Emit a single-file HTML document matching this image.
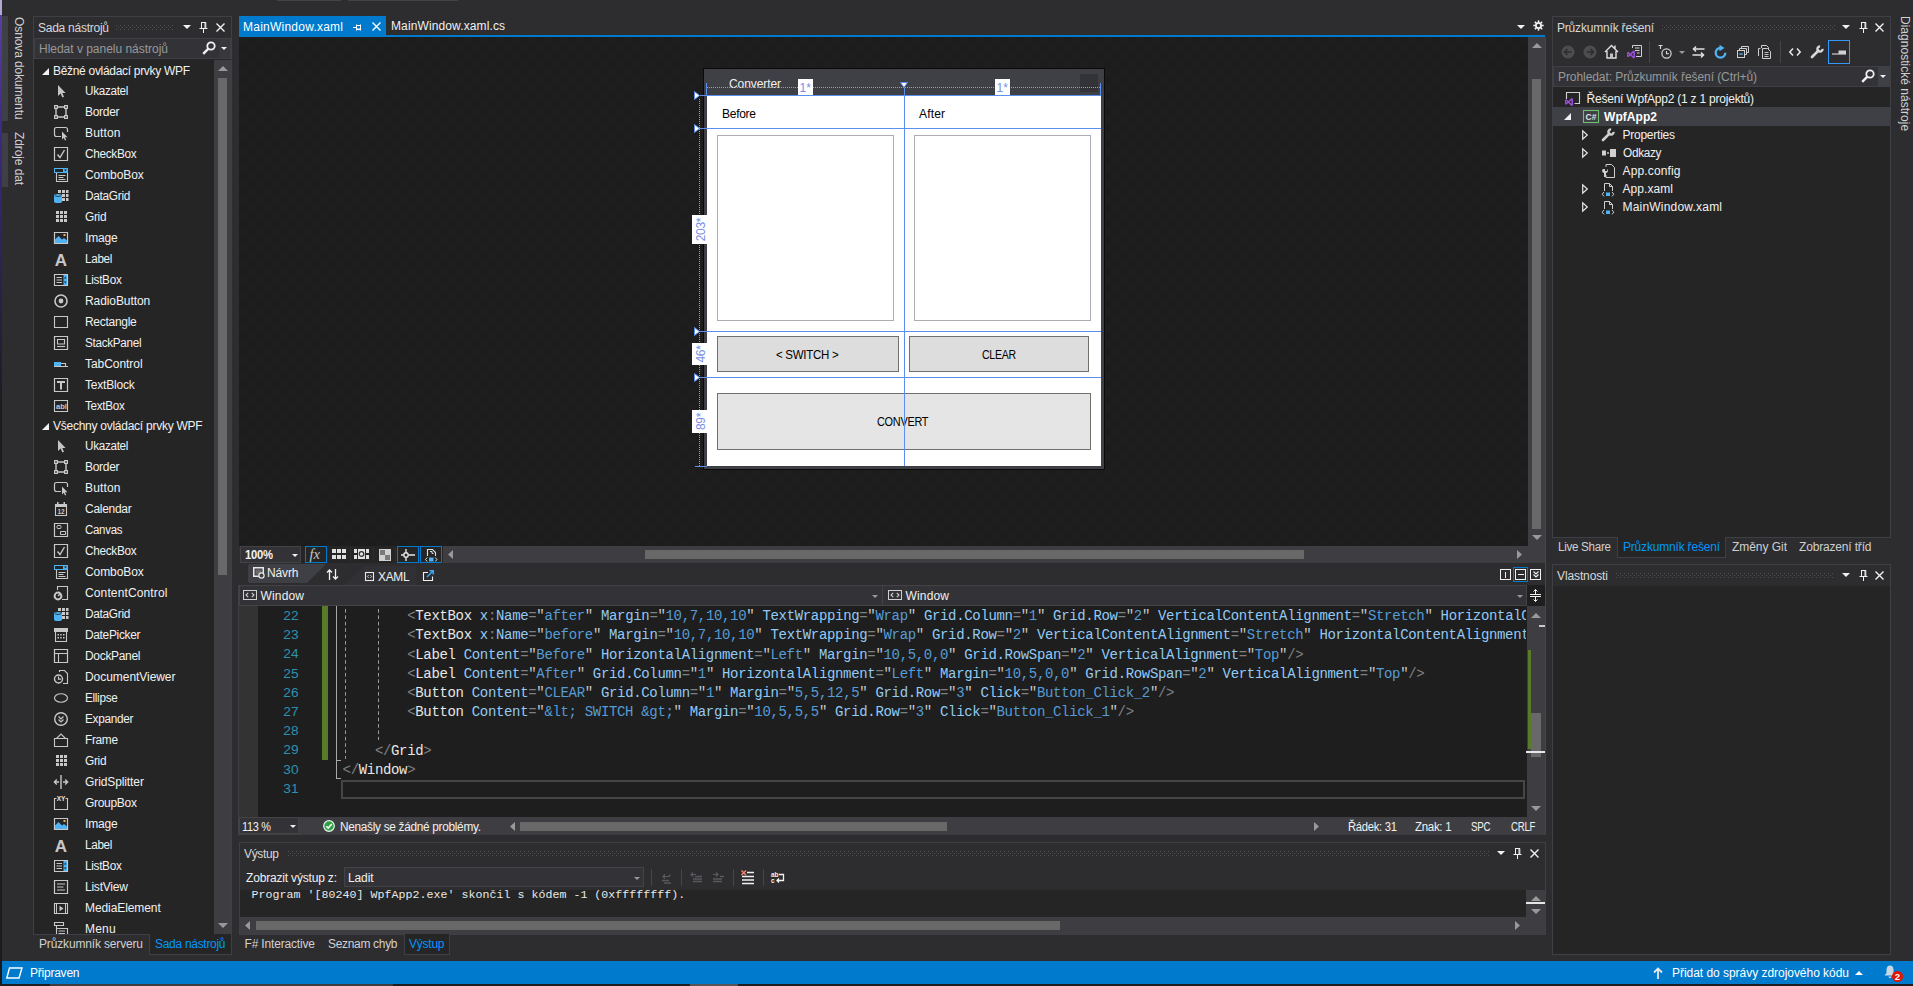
<!DOCTYPE html>
<html>
<head>
<meta charset="utf-8">
<title>VS</title>
<style>
*{box-sizing:border-box;margin:0;padding:0}
html,body{width:1913px;height:986px;overflow:hidden;background:#2d2d30}
body{font-family:"Liberation Sans",sans-serif;font-size:12px;color:#f1f1f1;position:relative}
.a{position:absolute}
.t{position:absolute;white-space:pre;line-height:14px;height:14px}
svg{position:absolute;overflow:visible}
.grip{position:absolute;height:5px;background-image:radial-gradient(circle,#59595e 0.55px,transparent 0.9px),radial-gradient(circle,#59595e 0.55px,transparent 0.9px);background-size:4px 4px;background-position:0 0,2px 2px}
.cl{position:absolute;white-space:pre;font-family:"Liberation Mono",monospace;line-height:19px;height:19px;color:#e6e6e6}
.cl .d{color:#808080}
.cl .k{color:#92caf4}
.cl .v{color:#569cd6}
.cl .q{color:#c8c8c8}
</style>
</head>
<body>
<div class="a" style="left:0;top:0;width:2px;height:15px;background:#b4a7d6"></div>
<div class="a" style="left:0;top:15px;width:2px;height:400px;background:linear-gradient(#5a3fa0,#3a2a80 30%,#1b1b1c)"></div>
<div class="a" style="left:0;top:415px;width:2px;height:546px;background:#1b1b1c"></div>
<div class="a" style="left:277px;top:0;width:64px;height:1px;background:#434346"></div><div class="a" style="left:348px;top:0;width:110px;height:1px;background:#434346"></div>
<div class="a" style="left:2px;top:16px;width:6px;height:105px;background:#3f3f46;"></div>
<div class="a" style="left:2px;top:133px;width:6px;height:54px;background:#3f3f46;"></div>
<div class="t" style="left:26px;top:17px;transform:rotate(90deg);transform-origin:0 0;letter-spacing:-0.1px;color:#d0d0d0">Osnova dokumentu</div>
<div class="t" style="left:26px;top:132px;transform:rotate(90deg);transform-origin:0 0;letter-spacing:-0.1px;color:#d0d0d0">Zdroje dat</div>
<div class="a" style="left:33px;top:16px;width:199px;height:919px;background:#252526;border:1px solid #3f3f46;"></div>
<div class="a" style="left:34px;top:17px;width:197px;height:21px;background:#2d2d30;"></div>
<div class="t" style="left:38px;top:20.5px;color:#d8d8d8;letter-spacing:-0.254px;">Sada nástrojů</div>
<div class="a" style="left:116px;top:25px;width:58px;height:1px;background-image:linear-gradient(90deg,#505055 1px,transparent 1px);background-size:4px 1px;"></div><div class="a" style="left:118px;top:27px;width:54px;height:1px;background-image:linear-gradient(90deg,#505055 1px,transparent 1px);background-size:4px 1px;"></div><div class="a" style="left:116px;top:29px;width:58px;height:1px;background-image:linear-gradient(90deg,#505055 1px,transparent 1px);background-size:4px 1px;"></div>
<svg style="left:183px;top:25px" width="8" height="4" viewBox="0 0 8 4"><path d="M0 0H8L4 4Z" fill="#f1f1f1"/></svg>
<svg style="left:199px;top:22px" width="9" height="11" viewBox="0 0 9 11"><path d="M2 0.5H7M2.5 0.5V6.5M6 0.5V6.5M6.8 0.5V6.5M0.5 6.5H8.5M4.5 6.5V11" stroke="#f1f1f1" stroke-width="1" fill="none"/></svg>
<svg style="left:216px;top:23px" width="9" height="9" viewBox="0 0 9 9"><path d="M0.5 0.5L8.5 8.5M8.5 0.5L0.5 8.5" stroke="#f1f1f1" stroke-width="1.4" fill="none"/></svg>
<div class="a" style="left:34px;top:38px;width:197px;height:21px;background:#333337;border:1px solid #3f3f46;"></div>
<div class="a" style="left:219px;top:39px;width:11px;height:19px;background:#38383c;"></div>
<div class="t" style="left:39px;top:41.5px;color:#999999;letter-spacing:-0.018px;">Hledat v panelu nástrojů</div>
<svg style="left:202px;top:41px" width="14" height="14" viewBox="0 0 14 14"><circle cx="9" cy="5" r="3.7" stroke="#f1f1f1" stroke-width="1.8" fill="none"/><path d="M6.4 7.6L1.2 12.8" stroke="#f1f1f1" stroke-width="2.4"/></svg>
<svg style="left:221px;top:47px" width="6" height="3" viewBox="0 0 6 3"><path d="M0 0H6L3 3Z" fill="#f1f1f1"/></svg>
<div class="a" style="left:34px;top:60px;width:180px;height:874px;background:#252526;"></div>
<div class="a" style="left:214px;top:60px;width:17px;height:874px;background:#3e3e42;"></div>
<div class="a" style="left:218px;top:78px;width:9px;height:497px;background:#686868;"></div>
<svg style="left:218px;top:66px" width="10" height="5" viewBox="0 0 10 5"><path d="M0 5H10L5 0Z" fill="#999"/></svg>
<svg style="left:218px;top:923px" width="10" height="5" viewBox="0 0 10 5"><path d="M0 0H10L5 5Z" fill="#999"/></svg>
<svg style="left:42px;top:67.5px" width="7" height="7" viewBox="0 0 7 7"><path d="M7 0V7H0Z" fill="#f1f1f1"/></svg>
<div class="t" style="left:53px;top:63.5px;color:#f1f1f1;letter-spacing:-0.300px;transform:scaleX(0.9989);transform-origin:0 50%;">Běžné ovládací prvky WPF</div>
<svg style="left:53px;top:83px" width="16" height="16" viewBox="0 0 16 16"><path d="M5 2V13L7.6 10.6L9.4 14.4L11 13.7L9.3 10H12.6Z" fill="#c5c5c5"/></svg>
<div class="t" style="left:85px;top:83.5px;letter-spacing:-0.300px;transform:scaleX(0.9733);transform-origin:0 50%;">Ukazatel</div>
<svg style="left:53px;top:104px" width="16" height="16" viewBox="0 0 16 16"><path d="M3 3H13V13H3Z" stroke="#c8c8c8" stroke-width="1.4" fill="none"/><path d="M1 1h4v4h-4zM11 1h4v4h-4zM1 11h4v4h-4zM11 11h4v4h-4z" fill="#c8c8c8"/><path d="M2 2h2v2h-2zM12 2h2v2h-2zM2 12h2v2h-2zM12 12h2v2h-2z" fill="#6a6a6a"/></svg>
<div class="t" style="left:85px;top:104.5px;letter-spacing:-0.300px;transform:scaleX(0.9994);transform-origin:0 50%;">Border</div>
<svg style="left:53px;top:125px" width="16" height="16" viewBox="0 0 16 16"><path d="M8 11.5H3.5Q1.5 11.5 1.5 9.5V4.5Q1.5 2.5 3.5 2.5H12.5Q14.5 2.5 14.5 4.5V7" stroke="#c8c8c8" stroke-width="1.2" fill="none"/><path d="M9 6.5V14.5L10.8 12.8L12 15.5L13.2 15L12 12.3H14.5Z" fill="#c8c8c8"/></svg>
<div class="t" style="left:85px;top:125.5px;letter-spacing:0.161px;">Button</div>
<svg style="left:53px;top:146px" width="16" height="16" viewBox="0 0 16 16"><path d="M1.5 1.5H14.5V14.5H1.5Z" stroke="#c8c8c8" stroke-width="1.2" fill="none"/><path d="M4.5 8.5L7 11.5L11.5 4" stroke="#c8c8c8" stroke-width="1.4" fill="none"/></svg>
<div class="t" style="left:85px;top:146.5px;letter-spacing:-0.300px;transform:scaleX(0.9830);transform-origin:0 50%;">CheckBox</div>
<svg style="left:53px;top:167px" width="16" height="16" viewBox="0 0 16 16"><path d="M1 1H15V6H1Z" fill="#4fb3f3"/><path d="M2 2H10V5H2Z" fill="#252526"/><path d="M11 2.5H14L12.5 4.5Z" fill="#252526"/><path d="M3.5 6V14.5H14.5V6" stroke="#c8c8c8" stroke-width="1.1" fill="none"/><path d="M5.5 8.5H12.5M5.5 10.5H10.5M5.5 12.5H12.5" stroke="#c8c8c8" stroke-width="1" fill="none"/></svg>
<div class="t" style="left:85px;top:167.5px;letter-spacing:-0.080px;">ComboBox</div>
<svg style="left:53px;top:188px" width="16" height="16" viewBox="0 0 16 16"><path d="M5 2h3v3h-3zM9 2h3v3h-3zM13 2h2.5v3h-2.5zM9 6h3v3h-3zM13 6h2.5v3h-2.5zM9 10h3v3h-3zM13 10h2.5v3h-2.5z" fill="#c8c8c8"/><path d="M1 7.5Q1 6 5 6T9 7.5V13.5Q9 15 5 15T1 13.5Z" fill="#4fb3f3"/><path d="M1.8 7.8Q5 9.2 8.2 7.8" stroke="#252526" stroke-width="0.8" fill="none"/></svg>
<div class="t" style="left:85px;top:188.5px;letter-spacing:-0.300px;transform:scaleX(0.9887);transform-origin:0 50%;">DataGrid</div>
<svg style="left:53px;top:209px" width="16" height="16" viewBox="0 0 16 16"><path d="M3 2h3v3h-3zM7 2h3v3h-3zM11 2h3v3h-3zM3 6h3v3h-3zM7 6h3v3h-3zM11 6h3v3h-3zM3 10h3v3h-3zM7 10h3v3h-3zM11 10h3v3h-3z" fill="#c8c8c8"/></svg>
<div class="t" style="left:85px;top:209.5px;letter-spacing:-0.300px;transform:scaleX(0.9876);transform-origin:0 50%;">Grid</div>
<svg style="left:53px;top:230px" width="16" height="16" viewBox="0 0 16 16"><path d="M1.5 2.5H14.5V13.5H1.5Z" stroke="#c8c8c8" stroke-width="1.2" fill="none"/><path d="M2 13V9.5L5.5 6L9 9.5L11 8L14 10.5V13Z" fill="#4fb3f3"/><path d="M10.5 4h2v2h-2z" fill="#e8b36a"/></svg>
<div class="t" style="left:85px;top:230.5px;letter-spacing:-0.163px;">Image</div>
<svg style="left:53px;top:251px" width="16" height="16" viewBox="0 0 16 16"><text x="8" y="14.5" font-family="Liberation Sans" font-weight="bold" font-size="17" text-anchor="middle" fill="#c8c8c8">A</text></svg>
<div class="t" style="left:85px;top:251.5px;letter-spacing:-0.300px;transform:scaleX(0.9729);transform-origin:0 50%;">Label</div>
<svg style="left:53px;top:272px" width="16" height="16" viewBox="0 0 16 16"><path d="M1.5 2.5H14.5V13.5H1.5Z" stroke="#c8c8c8" stroke-width="1.1" fill="none"/><path d="M3.5 5.5H9M3.5 8H9M3.5 10.5H9" stroke="#c8c8c8" stroke-width="1.1" fill="none"/><path d="M10.5 3H14V13H10.5Z" fill="#4fb3f3"/><path d="M11 6.5L12.25 4.5L13.5 6.5ZM11 9.5L12.25 11.5L13.5 9.5Z" fill="#252526"/></svg>
<div class="t" style="left:85px;top:272.5px;letter-spacing:-0.300px;transform:scaleX(0.9800);transform-origin:0 50%;">ListBox</div>
<svg style="left:53px;top:293px" width="16" height="16" viewBox="0 0 16 16"><circle cx="8" cy="8" r="6" stroke="#c8c8c8" stroke-width="1.6" fill="none"/><circle cx="8" cy="8" r="2.4" fill="#c8c8c8"/></svg>
<div class="t" style="left:85px;top:293.5px;letter-spacing:-0.085px;">RadioButton</div>
<svg style="left:53px;top:314px" width="16" height="16" viewBox="0 0 16 16"><path d="M1.5 2.5H14.5V13.5H1.5Z" stroke="#c8c8c8" stroke-width="1.1" fill="none"/></svg>
<div class="t" style="left:85px;top:314.5px;letter-spacing:-0.292px;">Rectangle</div>
<svg style="left:53px;top:335px" width="16" height="16" viewBox="0 0 16 16"><path d="M1.5 1.5H14.5V14.5H1.5Z" stroke="#c8c8c8" stroke-width="1.2" fill="none"/><path d="M4.5 4.5H11.5V9H4.5Z" stroke="#c8c8c8" stroke-width="1.1" fill="none"/><path d="M4 11.5H12" stroke="#c8c8c8" stroke-width="1.1" fill="none"/></svg>
<div class="t" style="left:85px;top:335.5px;letter-spacing:-0.300px;transform:scaleX(0.9741);transform-origin:0 50%;">StackPanel</div>
<svg style="left:53px;top:356px" width="16" height="16" viewBox="0 0 16 16"><path d="M1 6H8V10H1Z" fill="#4fb3f3"/><path d="M1 10.5H15M8 7.5H12.5V10" stroke="#c8c8c8" stroke-width="1.1" fill="none"/></svg>
<div class="t" style="left:85px;top:356.5px;letter-spacing:-0.048px;">TabControl</div>
<svg style="left:53px;top:377px" width="16" height="16" viewBox="0 0 16 16"><path d="M1.5 1.5H14.5V14.5H1.5Z" stroke="#c8c8c8" stroke-width="1.2" fill="none"/><path d="M4 4H12V6H9V12.5H7V6H4Z" fill="#c8c8c8"/></svg>
<div class="t" style="left:85px;top:377.5px;letter-spacing:-0.207px;">TextBlock</div>
<svg style="left:53px;top:398px" width="16" height="16" viewBox="0 0 16 16"><path d="M1.5 2.5H14.5V13.5H1.5Z" stroke="#c8c8c8" stroke-width="1.1" fill="none"/><text x="3" y="11" font-family="Liberation Sans" font-weight="bold" font-size="7.5" fill="#c8c8c8">abl</text></svg>
<div class="t" style="left:85px;top:398.5px;letter-spacing:-0.300px;transform:scaleX(0.9734);transform-origin:0 50%;">TextBox</div>
<svg style="left:42px;top:422.5px" width="7" height="7" viewBox="0 0 7 7"><path d="M7 0V7H0Z" fill="#f1f1f1"/></svg>
<div class="t" style="left:53px;top:418.5px;color:#f1f1f1;letter-spacing:-0.258px;">Všechny ovládací prvky WPF</div>
<svg style="left:53px;top:438px" width="16" height="16" viewBox="0 0 16 16"><path d="M5 2V13L7.6 10.6L9.4 14.4L11 13.7L9.3 10H12.6Z" fill="#c5c5c5"/></svg>
<div class="t" style="left:85px;top:438.5px;letter-spacing:-0.300px;transform:scaleX(0.9733);transform-origin:0 50%;">Ukazatel</div>
<svg style="left:53px;top:459px" width="16" height="16" viewBox="0 0 16 16"><path d="M3 3H13V13H3Z" stroke="#c8c8c8" stroke-width="1.4" fill="none"/><path d="M1 1h4v4h-4zM11 1h4v4h-4zM1 11h4v4h-4zM11 11h4v4h-4z" fill="#c8c8c8"/><path d="M2 2h2v2h-2zM12 2h2v2h-2zM2 12h2v2h-2zM12 12h2v2h-2z" fill="#6a6a6a"/></svg>
<div class="t" style="left:85px;top:459.5px;letter-spacing:-0.300px;transform:scaleX(0.9994);transform-origin:0 50%;">Border</div>
<svg style="left:53px;top:480px" width="16" height="16" viewBox="0 0 16 16"><path d="M8 11.5H3.5Q1.5 11.5 1.5 9.5V4.5Q1.5 2.5 3.5 2.5H12.5Q14.5 2.5 14.5 4.5V7" stroke="#c8c8c8" stroke-width="1.2" fill="none"/><path d="M9 6.5V14.5L10.8 12.8L12 15.5L13.2 15L12 12.3H14.5Z" fill="#c8c8c8"/></svg>
<div class="t" style="left:85px;top:480.5px;letter-spacing:0.161px;">Button</div>
<svg style="left:53px;top:501px" width="16" height="16" viewBox="0 0 16 16"><path d="M2.5 3.5H13.5V14.5H2.5Z" stroke="#c8c8c8" stroke-width="1.1" fill="none"/><path d="M2 3H14V6H2ZM4 1h1.5v2H4zM10.5 1H12v2h-1.5z" fill="#c8c8c8"/><text x="8" y="13" font-family="Liberation Sans" font-weight="bold" font-size="6.5" text-anchor="middle" fill="#c8c8c8">12</text></svg>
<div class="t" style="left:85px;top:501.5px;letter-spacing:-0.286px;">Calendar</div>
<svg style="left:53px;top:522px" width="16" height="16" viewBox="0 0 16 16"><path d="M1.5 1.5H14.5V14.5H1.5Z" stroke="#c8c8c8" stroke-width="1.2" fill="none"/><path d="M4 4.5Q4 3.5 5 3.5H7Q8 3.5 8 4.5V5.5Q8 6.5 7 6.5H5Q4 6.5 4 5.5Z" stroke="#c8c8c8" stroke-width="1" fill="none"/><path d="M7.5 9.5H12.5V12.5H7.5Z" stroke="#c8c8c8" stroke-width="1" fill="none"/></svg>
<div class="t" style="left:85px;top:522.5px;letter-spacing:-0.300px;transform:scaleX(0.9569);transform-origin:0 50%;">Canvas</div>
<svg style="left:53px;top:543px" width="16" height="16" viewBox="0 0 16 16"><path d="M1.5 1.5H14.5V14.5H1.5Z" stroke="#c8c8c8" stroke-width="1.2" fill="none"/><path d="M4.5 8.5L7 11.5L11.5 4" stroke="#c8c8c8" stroke-width="1.4" fill="none"/></svg>
<div class="t" style="left:85px;top:543.5px;letter-spacing:-0.300px;transform:scaleX(0.9830);transform-origin:0 50%;">CheckBox</div>
<svg style="left:53px;top:564px" width="16" height="16" viewBox="0 0 16 16"><path d="M1 1H15V6H1Z" fill="#4fb3f3"/><path d="M2 2H10V5H2Z" fill="#252526"/><path d="M11 2.5H14L12.5 4.5Z" fill="#252526"/><path d="M3.5 6V14.5H14.5V6" stroke="#c8c8c8" stroke-width="1.1" fill="none"/><path d="M5.5 8.5H12.5M5.5 10.5H10.5M5.5 12.5H12.5" stroke="#c8c8c8" stroke-width="1" fill="none"/></svg>
<div class="t" style="left:85px;top:564.5px;letter-spacing:-0.080px;">ComboBox</div>
<svg style="left:53px;top:585px" width="16" height="16" viewBox="0 0 16 16"><path d="M4.5 5V1.5H14.5V14.5H9" stroke="#c8c8c8" stroke-width="1.1" fill="none"/><circle cx="5" cy="11" r="3.4" stroke="#c8c8c8" stroke-width="2" fill="none"/><path d="M5 11L7.5 8.5" stroke="#c8c8c8" stroke-width="1.5" fill="none"/></svg>
<div class="t" style="left:85px;top:585.5px;letter-spacing:0.130px;">ContentControl</div>
<svg style="left:53px;top:606px" width="16" height="16" viewBox="0 0 16 16"><path d="M5 2h3v3h-3zM9 2h3v3h-3zM13 2h2.5v3h-2.5zM9 6h3v3h-3zM13 6h2.5v3h-2.5zM9 10h3v3h-3zM13 10h2.5v3h-2.5z" fill="#c8c8c8"/><path d="M1 7.5Q1 6 5 6T9 7.5V13.5Q9 15 5 15T1 13.5Z" fill="#4fb3f3"/><path d="M1.8 7.8Q5 9.2 8.2 7.8" stroke="#252526" stroke-width="0.8" fill="none"/></svg>
<div class="t" style="left:85px;top:606.5px;letter-spacing:-0.300px;transform:scaleX(0.9887);transform-origin:0 50%;">DataGrid</div>
<svg style="left:53px;top:627px" width="16" height="16" viewBox="0 0 16 16"><path d="M1 1H15V5H1Z" fill="#c8c8c8"/><path d="M2.5 5V14.5H13.5V5" stroke="#c8c8c8" stroke-width="1.1" fill="none"/><path d="M4.5 7h1.5v1.5H4.5zM7.2 7h1.5v1.5H7.2zM10 7h1.5v1.5H10zM4.5 10h1.5v1.5H4.5zM7.2 10h1.5v1.5H7.2zM10 10h1.5v1.5H10z" fill="#c8c8c8"/></svg>
<div class="t" style="left:85px;top:627.5px;letter-spacing:-0.300px;transform:scaleX(0.9913);transform-origin:0 50%;">DatePicker</div>
<svg style="left:53px;top:648px" width="16" height="16" viewBox="0 0 16 16"><path d="M1.5 1.5H14.5V14.5H1.5Z" stroke="#c8c8c8" stroke-width="1.2" fill="none"/><path d="M1.5 5.5H14.5M5.5 5.5V14.5" stroke="#c8c8c8" stroke-width="1.1" fill="none"/></svg>
<div class="t" style="left:85px;top:648.5px;letter-spacing:-0.300px;transform:scaleX(0.9976);transform-origin:0 50%;">DockPanel</div>
<svg style="left:53px;top:669px" width="16" height="16" viewBox="0 0 16 16"><path d="M6.5 3V1.5H11.5L14.5 4.5V14.5H10" stroke="#c8c8c8" stroke-width="1.1" fill="none"/><circle cx="5.5" cy="10" r="4" stroke="#c8c8c8" stroke-width="1.4" fill="none"/><path d="M5.5 7.5V10.2H8" stroke="#c8c8c8" stroke-width="1.2" fill="none"/></svg>
<div class="t" style="left:85px;top:669.5px;letter-spacing:-0.051px;">DocumentViewer</div>
<svg style="left:53px;top:690px" width="16" height="16" viewBox="0 0 16 16"><ellipse cx="8" cy="8" rx="6.5" ry="4.2" stroke="#c8c8c8" stroke-width="1.1" fill="none"/></svg>
<div class="t" style="left:85px;top:690.5px;letter-spacing:-0.300px;transform:scaleX(0.9746);transform-origin:0 50%;">Ellipse</div>
<svg style="left:53px;top:711px" width="16" height="16" viewBox="0 0 16 16"><circle cx="8" cy="8" r="6.3" stroke="#c8c8c8" stroke-width="1.4" fill="none"/><path d="M5.5 5.5L8 8L10.5 5.5M5.5 8.5L8 11L10.5 8.5" stroke="#c8c8c8" stroke-width="1.2" fill="none"/></svg>
<div class="t" style="left:85px;top:711.5px;letter-spacing:-0.300px;transform:scaleX(0.9823);transform-origin:0 50%;">Expander</div>
<svg style="left:53px;top:732px" width="16" height="16" viewBox="0 0 16 16"><path d="M1.5 6.5H14.5V14.5H1.5ZM3.5 6.5L8 2L12.5 6.5" stroke="#c8c8c8" stroke-width="1.1" fill="none"/></svg>
<div class="t" style="left:85px;top:732.5px;letter-spacing:-0.300px;transform:scaleX(0.9859);transform-origin:0 50%;">Frame</div>
<svg style="left:53px;top:753px" width="16" height="16" viewBox="0 0 16 16"><path d="M3 2h3v3h-3zM7 2h3v3h-3zM11 2h3v3h-3zM3 6h3v3h-3zM7 6h3v3h-3zM11 6h3v3h-3zM3 10h3v3h-3zM7 10h3v3h-3zM11 10h3v3h-3z" fill="#c8c8c8"/></svg>
<div class="t" style="left:85px;top:753.5px;letter-spacing:-0.300px;transform:scaleX(0.9876);transform-origin:0 50%;">Grid</div>
<svg style="left:53px;top:774px" width="16" height="16" viewBox="0 0 16 16"><path d="M8 1V15" stroke="#c8c8c8" stroke-width="1.4" fill="none"/><path d="M6 8H1.5M3.8 5.5L1.3 8L3.8 10.5M10 8H14.5M12.2 5.5L14.7 8L12.2 10.5" stroke="#c8c8c8" stroke-width="1.3" fill="none"/></svg>
<div class="t" style="left:85px;top:774.5px;letter-spacing:-0.102px;">GridSplitter</div>
<svg style="left:53px;top:795px" width="16" height="16" viewBox="0 0 16 16"><path d="M3.5 3.5H1.5V14.5H14.5V3.5H12.5" stroke="#c8c8c8" stroke-width="1.1" fill="none"/><text x="8" y="6" font-family="Liberation Sans" font-weight="bold" font-size="6.5" text-anchor="middle" fill="#e8e8e8">XY</text></svg>
<div class="t" style="left:85px;top:795.5px;letter-spacing:-0.300px;transform:scaleX(0.9994);transform-origin:0 50%;">GroupBox</div>
<svg style="left:53px;top:816px" width="16" height="16" viewBox="0 0 16 16"><path d="M1.5 2.5H14.5V13.5H1.5Z" stroke="#c8c8c8" stroke-width="1.2" fill="none"/><path d="M2 13V9.5L5.5 6L9 9.5L11 8L14 10.5V13Z" fill="#4fb3f3"/><path d="M10.5 4h2v2h-2z" fill="#e8b36a"/></svg>
<div class="t" style="left:85px;top:816.5px;letter-spacing:-0.163px;">Image</div>
<svg style="left:53px;top:837px" width="16" height="16" viewBox="0 0 16 16"><text x="8" y="14.5" font-family="Liberation Sans" font-weight="bold" font-size="17" text-anchor="middle" fill="#c8c8c8">A</text></svg>
<div class="t" style="left:85px;top:837.5px;letter-spacing:-0.300px;transform:scaleX(0.9729);transform-origin:0 50%;">Label</div>
<svg style="left:53px;top:858px" width="16" height="16" viewBox="0 0 16 16"><path d="M1.5 2.5H14.5V13.5H1.5Z" stroke="#c8c8c8" stroke-width="1.1" fill="none"/><path d="M3.5 5.5H9M3.5 8H9M3.5 10.5H9" stroke="#c8c8c8" stroke-width="1.1" fill="none"/><path d="M10.5 3H14V13H10.5Z" fill="#4fb3f3"/><path d="M11 6.5L12.25 4.5L13.5 6.5ZM11 9.5L12.25 11.5L13.5 9.5Z" fill="#252526"/></svg>
<div class="t" style="left:85px;top:858.5px;letter-spacing:-0.300px;transform:scaleX(0.9800);transform-origin:0 50%;">ListBox</div>
<svg style="left:53px;top:879px" width="16" height="16" viewBox="0 0 16 16"><path d="M1.5 1.5H14.5V14.5H1.5Z" stroke="#c8c8c8" stroke-width="1.2" fill="none"/><path d="M4 5H12M4 8H10.5M4 11H12" stroke="#c8c8c8" stroke-width="1.1" fill="none"/></svg>
<div class="t" style="left:85px;top:879.5px;letter-spacing:-0.238px;">ListView</div>
<svg style="left:53px;top:900px" width="16" height="16" viewBox="0 0 16 16"><path d="M1.5 3.5H14.5V13.5H1.5Z" stroke="#c8c8c8" stroke-width="1.1" fill="none"/><path d="M3.5 4V13M12.5 4V13" stroke="#c8c8c8" stroke-width="1" fill="none"/><path d="M6.5 5.8V11.2L10.5 8.5Z" fill="#c8c8c8"/></svg>
<div class="t" style="left:85px;top:900.5px;letter-spacing:-0.083px;">MediaElement</div>
<svg style="left:53px;top:921px" width="16" height="16" viewBox="0 0 16 16"><path d="M1.5 1.5H10.5V4.5H1.5Z" stroke="#c8c8c8" stroke-width="1.1" fill="none"/><path d="M3.5 4.5V14.5H14.5V7.5H3.5" stroke="#c8c8c8" stroke-width="1.1" fill="none"/><path d="M5.5 10H12M5.5 12.5H12" stroke="#c8c8c8" stroke-width="1" fill="none"/></svg>
<div class="t" style="left:85px;top:921.5px;letter-spacing:0.194px;">Menu</div>
<div class="a" style="left:33px;top:934px;width:199px;height:1px;background:#3f3f46;"></div>
<div class="a" style="left:33px;top:935px;width:200px;height:26px;background:#2d2d30;"></div>
<div class="t" style="left:39px;top:936.5px;color:#d0d0d0;letter-spacing:-0.159px;">Průzkumník serveru</div>
<div class="a" style="left:149px;top:934px;width:83px;height:21px;background:#252526;border:1px solid #3f3f46;border-top:none;"></div>
<div class="t" style="left:155px;top:936.5px;color:#0097fb;letter-spacing:-0.296px;">Sada nástrojů</div>
<div class="a" style="left:239px;top:16px;width:147px;height:20px;background:#007acc;"></div>
<div class="t" style="left:243px;top:19.7px;color:#ffffff;letter-spacing:0.236px;">MainWindow.xaml</div>
<svg style="left:353px;top:22px" width="9" height="9" viewBox="0 0 9 9"><path d="M0 5.5H3M3.5 2.5V8.5M3.5 3.5H7.5M3.5 7H7.5M3.5 7.6H7.5M7.5 2.5V8.5" stroke="#fff" stroke-width="1" fill="none"/></svg>
<svg style="left:372px;top:22px" width="9" height="9" viewBox="0 0 9 9"><path d="M0.5 0.5L8.5 8.5M8.5 0.5L0.5 8.5" stroke="#ffffff" stroke-width="1.4" fill="none"/></svg>
<div class="t" style="left:391px;top:19px;color:#f1f1f1;letter-spacing:0.116px;">MainWindow.xaml.cs</div>
<div class="a" style="left:239px;top:35px;width:1306px;height:2px;background:#007acc;"></div>
<svg style="left:1517px;top:25px" width="8" height="4" viewBox="0 0 8 4"><path d="M0 0H8L4 4Z" fill="#f1f1f1"/></svg>
<svg style="left:1533px;top:20px" width="11" height="11" viewBox="0 0 11 11"><circle cx="5.5" cy="5.5" r="2.6" stroke="#f1f1f1" stroke-width="1.8" fill="none"/><path d="M8.70 5.50L10.70 5.50" stroke="#f1f1f1" stroke-width="1.5"/><path d="M7.76 7.76L9.18 9.18" stroke="#f1f1f1" stroke-width="1.5"/><path d="M5.50 8.70L5.50 10.70" stroke="#f1f1f1" stroke-width="1.5"/><path d="M3.24 7.76L1.82 9.18" stroke="#f1f1f1" stroke-width="1.5"/><path d="M2.30 5.50L0.30 5.50" stroke="#f1f1f1" stroke-width="1.5"/><path d="M3.24 3.24L1.82 1.82" stroke="#f1f1f1" stroke-width="1.5"/><path d="M5.50 2.30L5.50 0.30" stroke="#f1f1f1" stroke-width="1.5"/><path d="M7.76 3.24L9.18 1.82" stroke="#f1f1f1" stroke-width="1.5"/></svg>
<div class="a" style="left:239px;top:37px;width:1289px;height:509px;background:#1e1e1e;background-image:conic-gradient(#1c1c1c 25%,#1e1e1e 0 50%,#1c1c1c 0 75%,#1e1e1e 0);background-size:16px 16px;background-position:0 0;"></div>
<div class="a" style="left:1528px;top:37px;width:17px;height:509px;background:#3e3e42;"></div>
<div class="a" style="left:1532px;top:79px;width:9px;height:450px;background:#686868;"></div>
<svg style="left:1532px;top:43px" width="10" height="5" viewBox="0 0 10 5"><path d="M0 5H10L5 0Z" fill="#999"/></svg>
<svg style="left:1532px;top:535px" width="10" height="5" viewBox="0 0 10 5"><path d="M0 0H10L5 5Z" fill="#999"/></svg>
<div class="a" style="left:703px;top:68px;width:402px;height:402px;background:#0a0a0a;"></div>
<div class="a" style="left:704px;top:69px;width:400px;height:400px;background:#3f3f46;"></div>
<div class="a" style="left:707px;top:96px;width:394px;height:370px;background:#ffffff;"></div>
<div class="a" style="left:1080px;top:74px;width:18px;height:18px;background:#333337;"></div>
<div class="t" style="left:729px;top:76.5px;color:#f1f1f1;letter-spacing:-0.086px;">Converter</div>
<div class="a" style="left:707px;top:87px;width:394px;height:1px;background-image:linear-gradient(90deg,#7ba4ee 1px,transparent 1px);background-size:2px 1px;"></div>
<div class="a" style="left:706px;top:83px;width:1px;height:13px;background:#5b8fee;"></div>
<div class="a" style="left:1100px;top:83px;width:1px;height:13px;background:#5b8fee;"></div>
<div class="a" style="left:798px;top:79px;width:15px;height:16px;background:#ffffff;"></div>
<div class="t" style="left:799.5px;top:80.5px;color:#7a8fe6;">1*</div>
<div class="a" style="left:995px;top:79px;width:15px;height:16px;background:#ffffff;"></div>
<div class="t" style="left:996.5px;top:80.5px;color:#7a8fe6;">1*</div>
<svg style="left:900px;top:82px" width="8" height="6" viewBox="0 0 8 6"><path d="M0.5 0.5H7.5L4 5.5Z" fill="#fff" stroke="#5b8fee" stroke-width="1"/></svg>
<div class="a" style="left:904px;top:88px;width:1px;height:378px;background:#5b8fee;"></div>
<div class="a" style="left:700px;top:95px;width:401px;height:1px;background:#5b8fee;"></div>
<svg style="left:694px;top:91px" width="6" height="9" viewBox="0 0 6 9"><path d="M0.5 0.5V8.5L5.5 4.5Z" fill="#fff" stroke="#5b8fee" stroke-width="1"/></svg>
<div class="a" style="left:700px;top:128px;width:401px;height:1px;background:#5b8fee;"></div>
<svg style="left:694px;top:124px" width="6" height="9" viewBox="0 0 6 9"><path d="M0.5 0.5V8.5L5.5 4.5Z" fill="#fff" stroke="#5b8fee" stroke-width="1"/></svg>
<div class="a" style="left:700px;top:331px;width:401px;height:1px;background:#5b8fee;"></div>
<svg style="left:694px;top:327px" width="6" height="9" viewBox="0 0 6 9"><path d="M0.5 0.5V8.5L5.5 4.5Z" fill="#fff" stroke="#5b8fee" stroke-width="1"/></svg>
<div class="a" style="left:700px;top:377px;width:401px;height:1px;background:#5b8fee;"></div>
<svg style="left:694px;top:373px" width="6" height="9" viewBox="0 0 6 9"><path d="M0.5 0.5V8.5L5.5 4.5Z" fill="#fff" stroke="#5b8fee" stroke-width="1"/></svg>
<div class="a" style="left:695px;top:466px;width:12px;height:1px;background:#5b8fee;"></div>
<div class="a" style="left:699px;top:99px;width:1px;height:367px;background-image:linear-gradient(#7ba4ee 1px,transparent 1px);background-size:1px 2px;"></div>
<div class="a" style="left:692px;top:215px;width:15px;height:29px;background:#ffffff;"></div>
<div class="t" style="left:693.7px;top:244px;width:29px;height:14px;text-align:center;color:#7a8fe6;transform:rotate(-90deg);transform-origin:0 0;letter-spacing:-0.3px">203*</div>
<div class="a" style="left:692px;top:343px;width:15px;height:22px;background:#ffffff;"></div>
<div class="t" style="left:693.7px;top:365px;width:22px;height:14px;text-align:center;color:#7a8fe6;transform:rotate(-90deg);transform-origin:0 0;letter-spacing:-0.3px">46*</div>
<div class="a" style="left:692px;top:410px;width:15px;height:23px;background:#ffffff;"></div>
<div class="t" style="left:693.7px;top:433px;width:23px;height:14px;text-align:center;color:#7a8fe6;transform:rotate(-90deg);transform-origin:0 0;letter-spacing:-0.3px">89*</div>
<div class="t" style="left:722px;top:106.5px;color:#000000;letter-spacing:-0.271px;">Before</div>
<div class="t" style="left:919px;top:106.5px;color:#000000;letter-spacing:0.164px;">After</div>
<div class="a" style="left:717px;top:135px;width:177px;height:186px;background:#ffffff;border:1px solid #abadb3;"></div>
<div class="a" style="left:914px;top:135px;width:177px;height:186px;background:#ffffff;border:1px solid #abadb3;"></div>
<div class="a" style="left:717px;top:336px;width:182px;height:36px;background:#dddddd;border:1px solid #707070;"></div>
<div class="a" style="left:909px;top:336px;width:180px;height:36px;background:#dddddd;border:1px solid #707070;"></div>
<div class="a" style="left:717px;top:393px;width:374px;height:57px;background:#e5e5e5;border:1px solid #707070;"></div>
<div class="t" style="left:776.4px;top:348px;color:#000000;letter-spacing:-0.300px;transform:scaleX(0.9600);transform-origin:0 50%;">&lt; SWITCH &gt;</div>
<div class="t" style="left:982px;top:348px;color:#000000;letter-spacing:-0.300px;transform:scaleX(0.8759);transform-origin:0 50%;">CLEAR</div>
<div class="t" style="left:877px;top:415px;color:#000000;letter-spacing:-0.300px;transform:scaleX(0.9090);transform-origin:0 50%;">CONVERT</div>
<div class="a" style="left:904px;top:393px;width:1px;height:57px;background:#5b8fee;"></div>
<div class="a" style="left:239px;top:546px;width:1307px;height:19px;background:#2d2d30;"></div>
<div class="a" style="left:443px;top:546px;width:1102px;height:17px;background:#3e3e42;"></div>
<div class="a" style="left:645px;top:550px;width:659px;height:9px;background:#686868;"></div>
<svg style="left:448px;top:550px" width="5" height="9" viewBox="0 0 5 9"><path d="M5 0V9L0 4.5Z" fill="#999"/></svg>
<svg style="left:1517px;top:550px" width="5" height="9" viewBox="0 0 5 9"><path d="M0 0V9L5 4.5Z" fill="#999"/></svg>
<div class="a" style="left:240px;top:546px;width:61px;height:17px;background:#333337;border:1px solid #434346;"></div>
<div class="a" style="left:301px;top:546px;width:142px;height:17px;background:#252526;"></div>
<div class="a" style="left:350px;top:547px;width:1px;height:15px;background:#2d2d30;"></div>
<div class="a" style="left:373px;top:547px;width:1px;height:15px;background:#2d2d30;"></div>
<div class="a" style="left:395px;top:547px;width:1px;height:15px;background:#2d2d30;"></div>
<div class="t" style="left:245px;top:548px;font-weight:bold;color:#f1f1f1;letter-spacing:-0.300px;transform:scaleX(0.9399);transform-origin:0 50%;">100%</div>
<svg style="left:292px;top:553.5px" width="6" height="3" viewBox="0 0 6 3"><path d="M0 0H6L3 3Z" fill="#f1f1f1"/></svg>
<div class="a" style="left:305px;top:546px;width:22px;height:17px;background:#252526;border:1px solid #007acc;"></div>
<div class="t" style="left:309.5px;top:546.5px;font-size:14.5px;font-family:'Liberation Serif',serif;font-style:italic;color:#c8c8c8;">fx</div>
<svg style="left:332px;top:549px" width="14" height="11" viewBox="0 0 14 11"><path d="M0 0h4v4h-4zM5 0h4v4h-4zM10 0h4v4h-4zM0 6h4v4h-4zM5 6h4v4h-4zM10 6h4v4h-4z" fill="#e0e0e0"/></svg>
<svg style="left:354px;top:549px" width="15" height="11" viewBox="0 0 15 11"><path d="M0 0h3v4h-3zM12 0h3v4h-3zM0 6h3v4h-3zM12 6h3v4h-3zM4 0h7v10h-7z" fill="#e0e0e0"/><circle cx="7.5" cy="5" r="2.3" fill="none" stroke="#2d2d30" stroke-width="1.2"/></svg>
<svg style="left:379px;top:549px" width="12" height="12" viewBox="0 0 12 12"><rect width="12" height="12" fill="#d0d0d0"/><path d="M1 1h5v5h-5zM6 6h5v5h-5z" fill="#7a7a7a"/></svg>
<div class="a" style="left:397px;top:546px;width:22px;height:17px;background:#252526;border:1px solid #007acc;"></div>
<svg style="left:401px;top:548.5px" width="14" height="12" viewBox="0 0 14 12"><circle cx="5" cy="6" r="2.2" fill="none" stroke="#e8e8e8" stroke-width="1.4"/><path d="M5 0V3.5M5 8.5V12M0 6H2.5M7.5 6H14" stroke="#e8e8e8" stroke-width="1.4"/></svg>
<div class="a" style="left:420px;top:546px;width:22px;height:17px;background:#252526;border:1px solid #007acc;"></div>
<svg style="left:424px;top:547.5px" width="14" height="14" viewBox="0 0 14 14"><path d="M3.5 8V1.5H8.5L11.5 4.5V8" fill="none" stroke="#e0e0e0" stroke-width="1.1"/><path d="M6 3.5h2v2h1.5" fill="none" stroke="#e0e0e0"/><rect x="5" y="9.5" width="4.5" height="4" fill="#4fb3f3"/><path d="M3.2 9.5L1.5 11.5L3.2 13.5M11.3 9.5L13 11.5L11.3 13.5" fill="none" stroke="#e0e0e0" stroke-width="1"/></svg>
<svg style="left:248px;top:564px" width="80" height="20" viewBox="0 0 80 20"><path d="M2 0H78L59 19H2Q0 19 0 17V2Q0 0 2 0Z" fill="#3f3f46"/></svg>
<svg style="left:345px;top:566px" width="72" height="20" viewBox="0 0 72 20"><path d="M19 0H68Q71 0 71 3V19H0Z" fill="#313135"/></svg>
<svg style="left:253px;top:567px" width="12" height="12" viewBox="0 0 12 12"><rect x="0.75" y="0.75" width="9.5" height="8.5" fill="none" stroke="#e8e8e8" stroke-width="1.5"/><rect x="2.5" y="2.5" width="6" height="5" fill="#6a6a6a"/><circle cx="8.5" cy="8.5" r="2.6" fill="#3f3f46" stroke="#e8e8e8" stroke-width="1.2"/></svg>
<div class="t" style="left:267px;top:566px;color:#f1f1f1;letter-spacing:-0.128px;">Návrh</div>
<svg style="left:327px;top:569px" width="12" height="11" viewBox="0 0 12 11"><path d="M2.5 11V1M0 3.5L2.5 1L5 3.5M8.5 0V10M6 7.5L8.5 10L11 7.5" fill="none" stroke="#f1f1f1" stroke-width="1.3"/></svg>
<svg style="left:365px;top:572px" width="9" height="9" viewBox="0 0 9 9"><rect x="0.5" y="0.5" width="8" height="8" fill="none" stroke="#e8e8e8" stroke-width="1.1"/><path d="M3.8 3L2.3 4.5L3.8 6M5.2 3L6.7 4.5L5.2 6" fill="none" stroke="#e8e8e8" stroke-width="0.8"/></svg>
<div class="t" style="left:378px;top:569.5px;color:#f1f1f1;letter-spacing:-0.300px;transform:scaleX(0.9912);transform-origin:0 50%;">XAML</div>
<svg style="left:423px;top:570px" width="12" height="12" viewBox="0 0 12 12"><path d="M5 2.5H0.5V10.5H9.5V6.5" fill="none" stroke="#f1f1f1" stroke-width="1.1"/><path d="M4 7L10 1M6.5 0.7H10.3V4.5" fill="none" stroke="#3aa7f0" stroke-width="1.5"/></svg>
<div class="a" style="left:1513px;top:567px;width:15px;height:15px;border:1px solid #007acc;"></div>
<div class="a" style="left:1500px;top:569px;width:11px;height:11px;border:1px solid #f1f1f1;"></div>
<div class="a" style="left:1515px;top:569px;width:11px;height:11px;border:1px solid #f1f1f1;"></div>
<div class="a" style="left:1530px;top:569px;width:11px;height:11px;border:1px solid #f1f1f1;"></div>
<div class="a" style="left:1505px;top:571.5px;width:1px;height:6px;background:#f1f1f1;"></div>
<div class="a" style="left:1517.5px;top:574px;width:6px;height:1px;background:#f1f1f1;"></div>
<svg style="left:1532.5px;top:571px" width="6" height="7" viewBox="0 0 6 7"><path d="M0.5 0.5L3 3L5.5 0.5M0.5 3.5L3 6L5.5 3.5" fill="none" stroke="#f1f1f1" stroke-width="1.1"/></svg>
<div class="a" style="left:238px;top:585px;width:1px;height:251px;background:#3f3f46;"></div>
<div class="a" style="left:239px;top:585px;width:1288px;height:21px;background:#333337;border:1px solid #434346;"></div>
<div class="a" style="left:882px;top:586px;width:1px;height:19px;background:#434346;"></div>
<div class="a" style="left:1527px;top:585px;width:19px;height:21px;background:#1e1e1e;"></div>
<svg style="left:243px;top:590px" width="14" height="10" viewBox="0 0 14 10"><rect x="0.5" y="0.5" width="13" height="9" fill="none" stroke="#d0d0d0" stroke-width="1"/><path d="M5.2 2.8L3 5L5.2 7.2M8.8 2.8L11 5L8.8 7.2" fill="none" stroke="#d0d0d0" stroke-width="1.1"/></svg>
<div class="t" style="left:260.5px;top:588.5px;color:#f1f1f1;letter-spacing:0.164px;">Window</div>
<svg style="left:888px;top:590px" width="14" height="10" viewBox="0 0 14 10"><rect x="0.5" y="0.5" width="13" height="9" fill="none" stroke="#d0d0d0" stroke-width="1"/><path d="M5.2 2.8L3 5L5.2 7.2M8.8 2.8L11 5L8.8 7.2" fill="none" stroke="#d0d0d0" stroke-width="1.1"/></svg>
<div class="t" style="left:905.5px;top:588.5px;color:#f1f1f1;letter-spacing:0.164px;">Window</div>
<svg style="left:872px;top:595px" width="6" height="3" viewBox="0 0 6 3"><path d="M0 0H6L3 3Z" fill="#999"/></svg>
<svg style="left:1517px;top:595px" width="6" height="3" viewBox="0 0 6 3"><path d="M0 0H6L3 3Z" fill="#999"/></svg>
<svg style="left:1530px;top:589px" width="11" height="13" viewBox="0 0 11 13"><path d="M0 5.5H11M0 7.5H11M5.5 0.5V5M3.5 2.5L5.5 0.5L7.5 2.5M5.5 8V12.5M3.5 10.5L5.5 12.5L7.5 10.5" fill="none" stroke="#f1f1f1" stroke-width="1"/></svg>
<div class="a" style="left:239px;top:606px;width:1288px;height:211px;background:#1e1e1e;"></div>
<div class="a" style="left:239px;top:606px;width:19px;height:211px;background:#333333;"></div>
<div class="a" style="left:322px;top:606px;width:6px;height:154px;background:#577a2b;"></div>
<div class="a" style="left:336px;top:606px;width:1px;height:173px;background:#a8a8a8;"></div>
<div class="a" style="left:336px;top:778px;width:5px;height:1px;background:#a8a8a8;"></div>
<div class="a" style="left:336px;top:760px;width:5px;height:1px;background:#a8a8a8;"></div>
<div class="a" style="left:345px;top:609px;width:1px;height:150px;background-image:linear-gradient(#9a9a9a 4px,transparent 4px);background-size:1px 6.4px;"></div>
<div class="a" style="left:378px;top:609px;width:1px;height:131px;background-image:linear-gradient(#9a9a9a 4px,transparent 4px);background-size:1px 6.4px;"></div>
<div class="t" style="left:258px;width:40.5px;text-align:right;top:609px;font-size:13.7px;color:#2b91af">22</div>
<div class="t" style="left:258px;width:40.5px;text-align:right;top:628.2px;font-size:13.7px;color:#2b91af">23</div>
<div class="t" style="left:258px;width:40.5px;text-align:right;top:647.4px;font-size:13.7px;color:#2b91af">24</div>
<div class="t" style="left:258px;width:40.5px;text-align:right;top:666.6px;font-size:13.7px;color:#2b91af">25</div>
<div class="t" style="left:258px;width:40.5px;text-align:right;top:685.8px;font-size:13.7px;color:#2b91af">26</div>
<div class="t" style="left:258px;width:40.5px;text-align:right;top:705px;font-size:13.7px;color:#2b91af">27</div>
<div class="t" style="left:258px;width:40.5px;text-align:right;top:724.2px;font-size:13.7px;color:#2b91af">28</div>
<div class="t" style="left:258px;width:40.5px;text-align:right;top:743.4px;font-size:13.7px;color:#2b91af">29</div>
<div class="t" style="left:258px;width:40.5px;text-align:right;top:762.6px;font-size:13.7px;color:#2b91af">30</div>
<div class="t" style="left:258px;width:40.5px;text-align:right;top:781.8px;font-size:13.7px;color:#2b91af">31</div>
<div class="a" style="left:258px;top:606px;width:1268px;height:211px;overflow:hidden">
<div class="cl" style="left:84.6px;top:1.1px;font-size:14px;letter-spacing:-0.330px">        <span class="d">&lt;</span>TextBox <span class="k">x</span><span class="d">:</span><span class="k">Name</span><span class="d">=</span><span class="q">"</span><span class="v">after</span><span class="q">"</span> <span class="k">Margin</span><span class="d">=</span><span class="q">"</span><span class="v">10,7,10,10</span><span class="q">"</span> <span class="k">TextWrapping</span><span class="d">=</span><span class="q">"</span><span class="v">Wrap</span><span class="q">"</span> <span class="k">Grid.Column</span><span class="d">=</span><span class="q">"</span><span class="v">1</span><span class="q">"</span> <span class="k">Grid.Row</span><span class="d">=</span><span class="q">"</span><span class="v">2</span><span class="q">"</span> <span class="k">VerticalContentAlignment</span><span class="d">=</span><span class="q">"</span><span class="v">Stretch</span><span class="q">"</span> <span class="k">HorizontalContentAlignment</span><span class="d">=</span><span class="q">"</span><span class="v">Stretch</span><span class="q">"</span><span class="d">/&gt;</span></div>
<div class="cl" style="left:84.6px;top:20.3px;font-size:14px;letter-spacing:-0.330px">        <span class="d">&lt;</span>TextBox <span class="k">x</span><span class="d">:</span><span class="k">Name</span><span class="d">=</span><span class="q">"</span><span class="v">before</span><span class="q">"</span> <span class="k">Margin</span><span class="d">=</span><span class="q">"</span><span class="v">10,7,10,10</span><span class="q">"</span> <span class="k">TextWrapping</span><span class="d">=</span><span class="q">"</span><span class="v">Wrap</span><span class="q">"</span> <span class="k">Grid.Row</span><span class="d">=</span><span class="q">"</span><span class="v">2</span><span class="q">"</span> <span class="k">VerticalContentAlignment</span><span class="d">=</span><span class="q">"</span><span class="v">Stretch</span><span class="q">"</span> <span class="k">HorizontalContentAlignment</span><span class="d">=</span><span class="q">"</span><span class="v">Stretch</span><span class="q">"</span><span class="d">/&gt;</span></div>
<div class="cl" style="left:84.6px;top:39.5px;font-size:14px;letter-spacing:-0.330px">        <span class="d">&lt;</span>Label <span class="k">Content</span><span class="d">=</span><span class="q">"</span><span class="v">Before</span><span class="q">"</span> <span class="k">HorizontalAlignment</span><span class="d">=</span><span class="q">"</span><span class="v">Left</span><span class="q">"</span> <span class="k">Margin</span><span class="d">=</span><span class="q">"</span><span class="v">10,5,0,0</span><span class="q">"</span> <span class="k">Grid.RowSpan</span><span class="d">=</span><span class="q">"</span><span class="v">2</span><span class="q">"</span> <span class="k">VerticalAlignment</span><span class="d">=</span><span class="q">"</span><span class="v">Top</span><span class="q">"</span><span class="d">/&gt;</span></div>
<div class="cl" style="left:84.6px;top:58.7px;font-size:14px;letter-spacing:-0.330px">        <span class="d">&lt;</span>Label <span class="k">Content</span><span class="d">=</span><span class="q">"</span><span class="v">After</span><span class="q">"</span> <span class="k">Grid.Column</span><span class="d">=</span><span class="q">"</span><span class="v">1</span><span class="q">"</span> <span class="k">HorizontalAlignment</span><span class="d">=</span><span class="q">"</span><span class="v">Left</span><span class="q">"</span> <span class="k">Margin</span><span class="d">=</span><span class="q">"</span><span class="v">10,5,0,0</span><span class="q">"</span> <span class="k">Grid.RowSpan</span><span class="d">=</span><span class="q">"</span><span class="v">2</span><span class="q">"</span> <span class="k">VerticalAlignment</span><span class="d">=</span><span class="q">"</span><span class="v">Top</span><span class="q">"</span><span class="d">/&gt;</span></div>
<div class="cl" style="left:84.6px;top:77.9px;font-size:14px;letter-spacing:-0.330px">        <span class="d">&lt;</span>Button <span class="k">Content</span><span class="d">=</span><span class="q">"</span><span class="v">CLEAR</span><span class="q">"</span> <span class="k">Grid.Column</span><span class="d">=</span><span class="q">"</span><span class="v">1</span><span class="q">"</span> <span class="k">Margin</span><span class="d">=</span><span class="q">"</span><span class="v">5,5,12,5</span><span class="q">"</span> <span class="k">Grid.Row</span><span class="d">=</span><span class="q">"</span><span class="v">3</span><span class="q">"</span> <span class="k">Click</span><span class="d">=</span><span class="q">"</span><span class="v">Button_Click_2</span><span class="q">"</span><span class="d">/&gt;</span></div>
<div class="cl" style="left:84.6px;top:97.1px;font-size:14px;letter-spacing:-0.330px">        <span class="d">&lt;</span>Button <span class="k">Content</span><span class="d">=</span><span class="q">"</span><span class="v">&amp;lt; SWITCH &amp;gt;</span><span class="q">"</span> <span class="k">Margin</span><span class="d">=</span><span class="q">"</span><span class="v">10,5,5,5</span><span class="q">"</span> <span class="k">Grid.Row</span><span class="d">=</span><span class="q">"</span><span class="v">3</span><span class="q">"</span> <span class="k">Click</span><span class="d">=</span><span class="q">"</span><span class="v">Button_Click_1</span><span class="q">"</span><span class="d">/&gt;</span></div>
<div class="cl" style="left:84.6px;top:116.3px;font-size:14px;letter-spacing:-0.330px"></div>
<div class="cl" style="left:84.6px;top:135.5px;font-size:14px;letter-spacing:-0.330px">    <span class="d">&lt;/</span>Grid<span class="d">&gt;</span></div>
<div class="cl" style="left:84.6px;top:154.7px;font-size:14px;letter-spacing:-0.330px"><span class="d">&lt;/</span>Window<span class="d">&gt;</span></div>
<div class="cl" style="left:84.6px;top:173.9px;font-size:14px;letter-spacing:-0.330px"></div>
</div>
<div class="a" style="left:341px;top:780px;width:1184px;height:19px;border:2px solid #464646;"></div>
<div class="a" style="left:1527px;top:606px;width:19px;height:211px;background:#3e3e42;"></div>
<svg style="left:1531px;top:613px" width="10" height="5" viewBox="0 0 10 5"><path d="M0 5H10L5 0Z" fill="#999"/></svg>
<svg style="left:1531px;top:806px" width="10" height="5" viewBox="0 0 10 5"><path d="M0 0H10L5 5Z" fill="#999"/></svg>
<div class="a" style="left:1528px;top:650px;width:3px;height:99px;background:#577a2b;"></div>
<div class="a" style="left:1531px;top:713px;width:10px;height:44px;background:#686868;"></div>
<div class="a" style="left:1539px;top:625px;width:6px;height:1.5px;background:#c8c8c8;"></div>
<div class="a" style="left:1526px;top:751px;width:20px;height:2px;background:#e6e6e6;"></div>
<div class="a" style="left:239px;top:817px;width:1307px;height:18px;background:#3e3e42;"></div>
<div class="a" style="left:239px;top:817px;width:60px;height:17px;background:#333337;border:1px solid #434346;"></div>
<div class="t" style="left:242px;top:819.5px;color:#f1f1f1;letter-spacing:-0.300px;transform:scaleX(0.9081);transform-origin:0 50%;">113 %</div>
<svg style="left:290px;top:825px" width="6" height="3" viewBox="0 0 6 3"><path d="M0 0H6L3 3Z" fill="#f1f1f1"/></svg>
<svg style="left:322.5px;top:820px" width="12" height="12" viewBox="0 0 12 12"><circle cx="6" cy="6" r="5.3" fill="#2ea043" stroke="#e8f5e9" stroke-width="1.2"/><path d="M3.3 6.2L5.2 8.1L8.8 4" fill="none" stroke="#fff" stroke-width="1.5"/></svg>
<div class="t" style="left:339.5px;top:819.5px;color:#f1f1f1;letter-spacing:-0.300px;transform:scaleX(0.9858);transform-origin:0 50%;">Nenašly se žádné problémy.</div>
<div class="a" style="left:520px;top:821.5px;width:427px;height:9px;background:#686868;"></div>
<svg style="left:509.5px;top:822px" width="5" height="9" viewBox="0 0 5 9"><path d="M5 0V9L0 4.5Z" fill="#999"/></svg>
<svg style="left:1314px;top:822px" width="5" height="9" viewBox="0 0 5 9"><path d="M0 0V9L5 4.5Z" fill="#999"/></svg>
<div class="t" style="left:1347.5px;top:819.5px;color:#f1f1f1;letter-spacing:-0.300px;transform:scaleX(0.9368);transform-origin:0 50%;">Řádek: 31</div>
<div class="t" style="left:1415px;top:819.5px;color:#f1f1f1;letter-spacing:-0.300px;transform:scaleX(0.9550);transform-origin:0 50%;">Znak: 1</div>
<div class="t" style="left:1471px;top:819.5px;color:#f1f1f1;letter-spacing:-0.300px;transform:scaleX(0.8100);transform-origin:0 50%;">SPC</div>
<div class="t" style="left:1510.5px;top:819.5px;color:#f1f1f1;letter-spacing:-0.300px;transform:scaleX(0.8049);transform-origin:0 50%;">CRLF</div>
<div class="a" style="left:1545px;top:37px;width:1px;height:798px;background:#46464a;"></div>
<div class="a" style="left:239px;top:842px;width:1307px;height:93px;background:#252526;border:1px solid #3f3f46;"></div>
<div class="a" style="left:240px;top:843px;width:1305px;height:47px;background:#2d2d30;"></div>
<div class="t" style="left:243.5px;top:847px;color:#d8d8d8;letter-spacing:-0.300px;transform:scaleX(0.9947);transform-origin:0 50%;">Výstup</div>
<div class="a" style="left:288px;top:851px;width:1203px;height:1px;background-image:linear-gradient(90deg,#505055 1px,transparent 1px);background-size:4px 1px;"></div><div class="a" style="left:290px;top:853px;width:1199px;height:1px;background-image:linear-gradient(90deg,#505055 1px,transparent 1px);background-size:4px 1px;"></div><div class="a" style="left:288px;top:855px;width:1203px;height:1px;background-image:linear-gradient(90deg,#505055 1px,transparent 1px);background-size:4px 1px;"></div>
<svg style="left:1497px;top:851px" width="8" height="4" viewBox="0 0 8 4"><path d="M0 0H8L4 4Z" fill="#f1f1f1"/></svg>
<svg style="left:1513px;top:848px" width="9" height="11" viewBox="0 0 9 11"><path d="M2 0.5H7M2.5 0.5V6.5M6 0.5V6.5M6.8 0.5V6.5M0.5 6.5H8.5M4.5 6.5V11" stroke="#f1f1f1" stroke-width="1" fill="none"/></svg>
<svg style="left:1530px;top:849px" width="9" height="9" viewBox="0 0 9 9"><path d="M0.5 0.5L8.5 8.5M8.5 0.5L0.5 8.5" stroke="#f1f1f1" stroke-width="1.4" fill="none"/></svg>
<div class="t" style="left:246px;top:871px;color:#f1f1f1;letter-spacing:-0.178px;">Zobrazit výstup z:</div>
<div class="a" style="left:344px;top:867px;width:300px;height:20px;background:#333337;border:1px solid #434346;"></div>
<div class="t" style="left:348px;top:871px;color:#f1f1f1;letter-spacing:-0.131px;">Ladit</div>
<svg style="left:634px;top:876.5px" width="6" height="3" viewBox="0 0 6 3"><path d="M0 0H6L3 3Z" fill="#999"/></svg>
<div class="a" style="left:651px;top:869px;width:1px;height:17px;background:#46464a;"></div>
<div class="a" style="left:681px;top:869px;width:1px;height:17px;background:#46464a;"></div>
<div class="a" style="left:733px;top:869px;width:1px;height:17px;background:#46464a;"></div>
<div class="a" style="left:763px;top:869px;width:1px;height:17px;background:#46464a;"></div>
<svg style="left:660px;top:871px" width="13" height="13" viewBox="0 0 13 13"><path d="M3 5.5H8Q10 5.5 10 3.5M5 3.5L3 5.5L5 7.5" fill="none" stroke="#5a5a5e" stroke-width="1.2"/><path d="M2 9.5H9M4 12H11" stroke="#5a5a5e" stroke-width="1.4"/></svg>
<svg style="left:690px;top:872px" width="13" height="12" viewBox="0 0 13 12"><path d="M6 2.5H1M3 0.5L1 2.5L3 4.5" fill="none" stroke="#5a5a5e" stroke-width="1.2"/><path d="M3 7H12M3 9.5H12M5 4.5H12" stroke="#5a5a5e" stroke-width="1.4"/></svg>
<svg style="left:712px;top:872px" width="13" height="12" viewBox="0 0 13 12"><path d="M1 2.5H6M4 0.5L6 2.5L4 4.5" fill="none" stroke="#5a5a5e" stroke-width="1.2"/><path d="M1 7H10M1 9.5H10M8 4.5H12" stroke="#5a5a5e" stroke-width="1.4"/></svg>
<svg style="left:741px;top:870px" width="14" height="14" viewBox="0 0 14 14"><path d="M0.5 0.5L5 5M5 0.5L0.5 5" stroke="#f1866f" stroke-width="1.5"/><path d="M6 2.5H13M1 6.5H13M1 10H13M1 13.5H13" stroke="#f1f1f1" stroke-width="1.6"/></svg>
<svg style="left:771px;top:871px" width="14" height="13" viewBox="0 0 14 13"><text x="0" y="5.5" font-family="Liberation Sans" font-size="6.5" font-weight="bold" fill="#f1f1f1">ab</text><text x="0" y="12" font-family="Liberation Sans" font-size="6.5" font-weight="bold" fill="#f1f1f1">c</text><path d="M8 3.5H12.5V9.5H6M8 7.5L6 9.5L8 11.5" fill="none" stroke="#f1f1f1" stroke-width="1.3"/></svg>
<div class="a" style="left:240px;top:890px;width:1286px;height:27px;background:#252526;"></div>
<div class="t" style="left:251.5px;top:887.6px;font-family:'Liberation Mono',monospace;font-size:11.6px;letter-spacing:0.04px;color:#e8e8e8">Program '[80240] WpfApp2.exe' skončil s kódem -1 (0xffffffff).</div>
<div class="a" style="left:1526px;top:890px;width:19px;height:27px;background:#3e3e42;"></div>
<svg style="left:1531px;top:896px" width="10" height="5" viewBox="0 0 10 5"><path d="M0 5H10L5 0Z" fill="#999"/></svg>
<svg style="left:1531px;top:909px" width="10" height="5" viewBox="0 0 10 5"><path d="M0 0H10L5 5Z" fill="#999"/></svg>
<div class="a" style="left:1526px;top:902px;width:19px;height:2px;background:#e6e6e6;"></div>
<div class="a" style="left:240px;top:917px;width:1305px;height:17px;background:#3e3e42;"></div>
<div class="a" style="left:256px;top:921px;width:804px;height:9px;background:#686868;"></div>
<svg style="left:245px;top:921px" width="5" height="9" viewBox="0 0 5 9"><path d="M5 0V9L0 4.5Z" fill="#999"/></svg>
<svg style="left:1515px;top:921px" width="5" height="9" viewBox="0 0 5 9"><path d="M0 0V9L5 4.5Z" fill="#999"/></svg>
<div class="t" style="left:244.5px;top:936.5px;color:#d0d0d0;letter-spacing:-0.169px;">F# Interactive</div>
<div class="t" style="left:327.5px;top:936.5px;color:#d0d0d0;letter-spacing:-0.300px;transform:scaleX(0.9971);transform-origin:0 50%;">Seznam chyb</div>
<div class="a" style="left:404px;top:934px;width:46px;height:21px;background:#252526;border:1px solid #3f3f46;border-top:none;"></div>
<div class="t" style="left:409px;top:936.5px;color:#0097fb;letter-spacing:-0.237px;">Výstup</div>
<div class="a" style="left:1552px;top:16px;width:339px;height:522px;background:#252526;border:1px solid #3f3f46;"></div>
<div class="a" style="left:1553px;top:17px;width:337px;height:49px;background:#2d2d30;"></div>
<div class="t" style="left:1557px;top:20.5px;color:#d8d8d8;letter-spacing:-0.190px;">Průzkumník řešení</div>
<div class="a" style="left:1662px;top:25px;width:174px;height:1px;background-image:linear-gradient(90deg,#505055 1px,transparent 1px);background-size:4px 1px;"></div><div class="a" style="left:1664px;top:27px;width:170px;height:1px;background-image:linear-gradient(90deg,#505055 1px,transparent 1px);background-size:4px 1px;"></div><div class="a" style="left:1662px;top:29px;width:174px;height:1px;background-image:linear-gradient(90deg,#505055 1px,transparent 1px);background-size:4px 1px;"></div>
<svg style="left:1842px;top:25px" width="8" height="4" viewBox="0 0 8 4"><path d="M0 0H8L4 4Z" fill="#f1f1f1"/></svg>
<svg style="left:1859px;top:22px" width="9" height="11" viewBox="0 0 9 11"><path d="M2 0.5H7M2.5 0.5V6.5M6 0.5V6.5M6.8 0.5V6.5M0.5 6.5H8.5M4.5 6.5V11" stroke="#f1f1f1" stroke-width="1" fill="none"/></svg>
<svg style="left:1875px;top:23px" width="9" height="9" viewBox="0 0 9 9"><path d="M0.5 0.5L8.5 8.5M8.5 0.5L0.5 8.5" stroke="#f1f1f1" stroke-width="1.4" fill="none"/></svg>
<svg style="left:1561px;top:45px" width="14" height="14" viewBox="0 0 14 14"><circle cx="7" cy="7" r="6.5" fill="#4d4d50"/><path d="M10.5 7H4M6.5 4L3.5 7L6.5 10" fill="none" stroke="#2d2d30" stroke-width="1.6"/></svg>
<svg style="left:1583px;top:45px" width="14" height="14" viewBox="0 0 14 14"><circle cx="7" cy="7" r="6.5" fill="#4d4d50"/><path d="M3.5 7H10M7.5 4L10.5 7L7.5 10" fill="none" stroke="#2d2d30" stroke-width="1.6"/></svg>
<svg style="left:1604px;top:44px" width="15" height="15" viewBox="0 0 15 15"><path d="M1 8L7.5 1.5L14 8M3 7V14H12V7M11 4.5V1.5" fill="none" stroke="#e0e0e0" stroke-width="1.4"/><rect x="6" y="9.5" width="3" height="4.5" fill="#c0c0c0"/></svg>
<svg style="left:1627px;top:45px" width="15" height="14" viewBox="0 0 15 14"><path d="M5.5 3V0.5H14.5V11.5H9" fill="none" stroke="#d0d0d0" stroke-width="1"/><path d="M8 3H12.5M8 5.5H12.5M10 8H12.5" stroke="#d0d0d0" stroke-width="1"/><path d="M0 7.5L1.3 6.8L3.3 8.6L6.5 5.5L8 6.2V12.8L6.5 13.5L3.3 10.4L1.3 12.2L0 11.5ZM1.3 8.6V10.4L2.3 9.5ZM6.5 7.7L4.4 9.5L6.5 11.3Z" fill="#9b4fd6" fill-rule="evenodd"/></svg>
<div class="a" style="left:1649px;top:41px;width:1px;height:22px;background:#46464a;"></div>
<svg style="left:1658px;top:44px" width="16" height="16" viewBox="0 0 16 16"><circle cx="8.5" cy="9.5" r="4.6" fill="none" stroke="#d8d8d8" stroke-width="1.2"/><path d="M8.5 7V9.8H11" fill="none" stroke="#d8d8d8" stroke-width="1.1"/><path d="M0.5 1.5H4.5M2.5 1.5V5" stroke="#d8d8d8" stroke-width="1.2"/></svg>
<svg style="left:1679px;top:51px" width="6" height="3" viewBox="0 0 6 3"><path d="M0 0H6L3 3Z" fill="#999"/></svg>
<svg style="left:1692px;top:46px" width="13" height="12" viewBox="0 0 13 12"><path d="M12.5 3H1.5M4 0.5L1.5 3L4 5.5M0.5 9H11.5M9 6.5L11.5 9L9 11.5" fill="none" stroke="#e0e0e0" stroke-width="1.5"/></svg>
<svg style="left:1714px;top:45px" width="13" height="14" viewBox="0 0 13 14"><path d="M6.5 3A4.8 4.8 0 1 0 11.3 7.8" fill="none" stroke="#4fb3f3" stroke-width="2.3"/><path d="M5.5 -0.3L10.5 3L5.5 6.3Z" fill="#4fb3f3"/></svg>
<svg style="left:1737px;top:46px" width="12" height="12" viewBox="0 0 12 12"><path d="M4.5 2.5V0.5H11.5V6.5H10M2.5 4.5V2.5H9.5V8.5H8" fill="none" stroke="#d0d0d0" stroke-width="1"/><rect x="0.5" y="4.5" width="7" height="7" fill="none" stroke="#d0d0d0" stroke-width="1"/><path d="M2.2 8H5.8" stroke="#4fb3f3" stroke-width="1.3"/></svg>
<svg style="left:1758px;top:45px" width="14" height="14" viewBox="0 0 14 14"><path d="M3.5 3V0.5H8.5L10.5 2.5V4" fill="none" stroke="#d0d0d0" stroke-width="1"/><path d="M0.5 11V3.5H2.5M4.5 3.5H9.5L12.5 6.5V13.5H4.5Z" fill="none" stroke="#d0d0d0" stroke-width="1"/><path d="M6.5 7.5H10.5M6.5 9.5H10.5M6.5 11.5H10.5" stroke="#d0d0d0" stroke-width="0.9"/></svg>
<div class="a" style="left:1780px;top:41px;width:1px;height:22px;background:#46464a;"></div>
<svg style="left:1789px;top:48px" width="12" height="8" viewBox="0 0 12 8"><path d="M4 0.5L0.8 4L4 7.5M8 0.5L11.2 4L8 7.5" fill="none" stroke="#e8e8e8" stroke-width="1.5"/></svg>
<svg style="left:1810px;top:45px" width="14" height="14" viewBox="0 0 14 14"><path d="M12.6 3.9A2.6 2.6 0 1 1 10.1 1.4" fill="none" stroke="#d8d8d8" stroke-width="2.4"/><path d="M8.4 5.6L2 12" stroke="#d8d8d8" stroke-width="2.7" stroke-linecap="round"/></svg>
<div class="a" style="left:1828px;top:40px;width:22px;height:24px;border:1px solid #3399ff;"></div>
<svg style="left:1832px;top:49px" width="14" height="6" viewBox="0 0 14 6"><path d="M0 5H14" stroke="#d0d0d0" stroke-width="1.2"/><rect x="6.5" y="1.5" width="7.5" height="3.5" fill="#d0d0d0"/></svg>
<div class="a" style="left:1553px;top:66px;width:337px;height:21px;background:#333337;border:1px solid #3f3f46;"></div>
<div class="a" style="left:1878px;top:67px;width:11px;height:19px;background:#3f3f46;"></div>
<div class="t" style="left:1558px;top:70px;color:#999999;letter-spacing:-0.076px;">Prohledat: Průzkumník řešení (Ctrl+ů)</div>
<svg style="left:1861px;top:69px" width="14" height="14" viewBox="0 0 14 14"><circle cx="9" cy="5" r="3.7" stroke="#f1f1f1" stroke-width="1.8" fill="none"/><path d="M6.4 7.6L1.2 12.8" stroke="#f1f1f1" stroke-width="2.4"/></svg>
<svg style="left:1880px;top:75px" width="6" height="3" viewBox="0 0 6 3"><path d="M0 0H6L3 3Z" fill="#f1f1f1"/></svg>
<div class="a" style="left:1553px;top:107px;width:337px;height:19px;background:#3f3f46;"></div>
<svg style="left:1565px;top:92px" width="16" height="14" viewBox="0 0 16 14"><path d="M1.5 7V0.5H14.5V11.5H9.5" fill="none" stroke="#d0d0d0" stroke-width="1.1"/><g transform="translate(0,5)"><path d="M0 3L1.3 2.3L3.3 4.1L6.5 1L8 1.7V8.3L6.5 9L3.3 5.9L1.3 7.7L0 7ZM1.3 4.1V5.9L2.3 5ZM6.5 3.2L4.4 5L6.5 6.8Z" fill="#9b4fd6" fill-rule="evenodd"/></g></svg>
<div class="t" style="left:1586.5px;top:92px;color:#f1f1f1;letter-spacing:-0.220px;">Řešení WpfApp2 (1 z 1 projektů)</div>
<svg style="left:1564px;top:113px" width="7" height="7" viewBox="0 0 7 7"><path d="M7 0V7H0Z" fill="#f1f1f1"/></svg>
<svg style="left:1583px;top:110px" width="16" height="14" viewBox="0 0 16 14"><rect x="0.5" y="0.5" width="15" height="12" fill="none" stroke="#6fbf73" stroke-width="1.1"/><text x="8" y="10" text-anchor="middle" font-family="Liberation Sans" font-weight="bold" font-size="8.5" fill="#e0e0e0">C#</text></svg>
<div class="t" style="left:1604px;top:110px;font-weight:bold;color:#ffffff;letter-spacing:0.058px;">WpfApp2</div>
<svg style="left:1582px;top:129.5px" width="6" height="10" viewBox="0 0 6 10"><path d="M0.7 0.9V9.1L5.3 5Z" fill="none" stroke="#e8e8e8" stroke-width="1.2"/></svg>
<svg style="left:1601px;top:128px" width="14" height="14" viewBox="0 0 14 14"><path d="M12.6 3.9A2.6 2.6 0 1 1 10.1 1.4" fill="none" stroke="#d0d0d0" stroke-width="2.4"/><path d="M8.4 5.6L2 12" stroke="#d0d0d0" stroke-width="2.7" stroke-linecap="round"/></svg>
<div class="t" style="left:1622.5px;top:128px;color:#f1f1f1;letter-spacing:-0.244px;">Properties</div>
<svg style="left:1582px;top:147.5px" width="6" height="10" viewBox="0 0 6 10"><path d="M0.7 0.9V9.1L5.3 5Z" fill="none" stroke="#e8e8e8" stroke-width="1.2"/></svg>
<svg style="left:1602px;top:149px" width="14" height="8" viewBox="0 0 14 8"><rect x="0" y="1.5" width="4" height="5" fill="#d0d0d0"/><rect x="5" y="3.3" width="2" height="1.4" fill="#d0d0d0"/><rect x="8" y="0" width="6" height="8" fill="#d0d0d0"/></svg>
<div class="t" style="left:1622.5px;top:146px;color:#f1f1f1;letter-spacing:-0.300px;transform:scaleX(0.9826);transform-origin:0 50%;">Odkazy</div>
<svg style="left:1601px;top:164px" width="14" height="15" viewBox="0 0 14 15"><path d="M5 3V0.5H10.5L13.5 3.5V13.5H5V11" fill="none" stroke="#d0d0d0" stroke-width="1"/><path d="M2 5A2.2 2.2 0 0 0 3 9V13H5V9A2.2 2.2 0 0 0 6 5V7H4V5Z" fill="#d0d0d0"/></svg>
<div class="t" style="left:1622.5px;top:164px;color:#f1f1f1;letter-spacing:0.144px;">App.config</div>
<svg style="left:1582px;top:183.5px" width="6" height="10" viewBox="0 0 6 10"><path d="M0.7 0.9V9.1L5.3 5Z" fill="none" stroke="#e8e8e8" stroke-width="1.2"/></svg>
<svg style="left:1601px;top:183px" width="14" height="14" viewBox="0 0 14 14"><path d="M3.5 8V0.5H8.5L11.5 3.5V8M8.5 0.5V3.5H11.5" fill="none" stroke="#d0d0d0" stroke-width="1"/><rect x="5" y="9.5" width="4" height="3.5" fill="#4fb3f3"/><path d="M3 9L1.2 11.2L3 13.4M11 9L12.8 11.2L11 13.4" fill="none" stroke="#d0d0d0" stroke-width="1"/></svg>
<div class="t" style="left:1622.5px;top:182px;color:#f1f1f1;letter-spacing:0.068px;">App.xaml</div>
<svg style="left:1582px;top:201.5px" width="6" height="10" viewBox="0 0 6 10"><path d="M0.7 0.9V9.1L5.3 5Z" fill="none" stroke="#e8e8e8" stroke-width="1.2"/></svg>
<svg style="left:1601px;top:201px" width="14" height="14" viewBox="0 0 14 14"><path d="M3.5 8V0.5H8.5L11.5 3.5V8M8.5 0.5V3.5H11.5" fill="none" stroke="#d0d0d0" stroke-width="1"/><rect x="5" y="9.5" width="4" height="3.5" fill="#4fb3f3"/><path d="M3 9L1.2 11.2L3 13.4M11 9L12.8 11.2L11 13.4" fill="none" stroke="#d0d0d0" stroke-width="1"/></svg>
<div class="t" style="left:1622.5px;top:200px;color:#f1f1f1;letter-spacing:0.200px;">MainWindow.xaml</div>
<div class="t" style="left:1558px;top:540px;color:#d0d0d0;letter-spacing:-0.300px;transform:scaleX(0.9694);transform-origin:0 50%;">Live Share</div>
<div class="a" style="left:1617px;top:537px;width:109px;height:21px;background:#252526;border:1px solid #3f3f46;border-top:none;"></div>
<div class="t" style="left:1623px;top:540px;color:#0097fb;letter-spacing:-0.190px;">Průzkumník řešení</div>
<div class="t" style="left:1732px;top:540px;color:#d0d0d0;letter-spacing:-0.043px;">Změny Git</div>
<div class="t" style="left:1799px;top:540px;color:#d0d0d0;letter-spacing:-0.169px;">Zobrazení tříd</div>
<div class="a" style="left:1552px;top:564px;width:339px;height:391px;background:#252526;border:1px solid #3f3f46;"></div>
<div class="a" style="left:1553px;top:565px;width:337px;height:21px;background:#2d2d30;"></div>
<div class="t" style="left:1557px;top:569px;color:#d8d8d8;letter-spacing:-0.114px;">Vlastnosti</div>
<div class="a" style="left:1616px;top:573px;width:220px;height:1px;background-image:linear-gradient(90deg,#505055 1px,transparent 1px);background-size:4px 1px;"></div><div class="a" style="left:1618px;top:575px;width:216px;height:1px;background-image:linear-gradient(90deg,#505055 1px,transparent 1px);background-size:4px 1px;"></div><div class="a" style="left:1616px;top:577px;width:220px;height:1px;background-image:linear-gradient(90deg,#505055 1px,transparent 1px);background-size:4px 1px;"></div>
<svg style="left:1842px;top:573px" width="8" height="4" viewBox="0 0 8 4"><path d="M0 0H8L4 4Z" fill="#f1f1f1"/></svg>
<svg style="left:1859px;top:570px" width="9" height="11" viewBox="0 0 9 11"><path d="M2 0.5H7M2.5 0.5V6.5M6 0.5V6.5M6.8 0.5V6.5M0.5 6.5H8.5M4.5 6.5V11" stroke="#f1f1f1" stroke-width="1" fill="none"/></svg>
<svg style="left:1875px;top:571px" width="9" height="9" viewBox="0 0 9 9"><path d="M0.5 0.5L8.5 8.5M8.5 0.5L0.5 8.5" stroke="#f1f1f1" stroke-width="1.4" fill="none"/></svg>
<div class="t" style="left:1912px;top:16px;transform:rotate(90deg);transform-origin:0 0;letter-spacing:0.02px;color:#d0d0d0">Diagnostické nástroje</div>
<div class="a" style="left:2px;top:961px;width:1911px;height:23px;background:#007acc;"></div>
<div class="a" style="left:0px;top:961px;width:2px;height:25px;background:#1b1b1c;"></div>
<div class="a" style="left:0px;top:984px;width:1913px;height:2px;background:#1f1f20;"></div>
<div class="a" style="left:50px;top:984px;width:343px;height:2px;background:#3d3d3d;"></div>
<div class="a" style="left:690px;top:984px;width:48px;height:2px;background:#555555;"></div>
<svg style="left:6px;top:967px" width="17" height="12" viewBox="0 0 17 12"><path d="M3.5 1H16L13 11H0.8Z" fill="none" stroke="#fff" stroke-width="1.4"/></svg>
<div class="t" style="left:30px;top:965.5px;color:#ffffff;letter-spacing:-0.232px;">Připraven</div>
<svg style="left:1653px;top:967px" width="10" height="12" viewBox="0 0 10 12"><path d="M5 12V2M1 5.5L5 1.5L9 5.5" fill="none" stroke="#e8e8e8" stroke-width="1.8"/></svg>
<div class="t" style="left:1672px;top:965.5px;color:#ffffff;letter-spacing:-0.036px;">Přidat do správy zdrojového kódu</div>
<svg style="left:1855px;top:971px" width="8" height="4" viewBox="0 0 8 4"><path d="M0 4H8L4 0Z" fill="#fff"/></svg>
<svg style="left:1884px;top:965px" width="12" height="13" viewBox="0 0 12 13"><path d="M6 0.5Q9.5 0.5 9.5 5V8L11.5 10.5H0.5L2.5 8V5Q2.5 0.5 6 0.5ZM4.5 11.5H7.5Q7.5 13 6 13T4.5 11.5Z" fill="#c9d7e4"/></svg>
<svg style="left:1892px;top:970.5px" width="11" height="11" viewBox="0 0 11 11"><circle cx="5.5" cy="5.5" r="5.5" fill="#e51400"/><text x="5.5" y="9" text-anchor="middle" font-family="Liberation Sans" font-size="9.5" font-weight="bold" fill="#fff">2</text></svg>
</body>
</html>
